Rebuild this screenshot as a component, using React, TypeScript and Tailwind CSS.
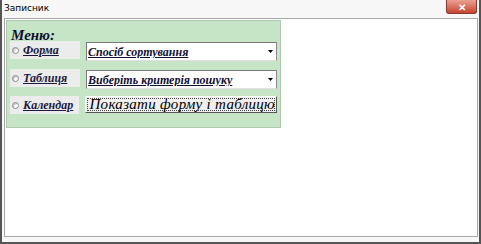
const serif = { fontFamily: '"Liberation Serif", "Times New Roman", serif' };

function Radio() {
  return <span className="inline-block h-[7px] w-[7px] shrink-0 rounded-full border border-[#8a8a8a] bg-white shadow-[inset_1px_1px_1px_#bbb]" />;
}

function RowLabel({ text }: { text: string }) {
  return (
    <div className="flex h-[18px] w-[71px] items-center gap-[4px] bg-[#ececec] pl-[2px]">
      <Radio />
      <span className="whitespace-nowrap text-[12px] font-bold italic underline leading-none text-[#1a1a40]" style={serif}>
        {text}
      </span>
    </div>
  );
}

function Select({ text }: { text: string }) {
  return (
    <div className="flex h-[19px] w-[191px] items-center border border-t-[#7a7a7a] border-l-[#7a7a7a] border-b-[#e0e0e0] border-r-[#8a8a8a] bg-white pl-[1px]">
      <span className="flex-1 truncate text-[12px] font-bold italic underline leading-none text-[#101030]" style={serif}>
        {text}
      </span>
      <span className="flex h-full w-[12px] items-center justify-center">
        <svg width="5" height="3" viewBox="0 0 5 3">
          <path d="M0 0h5L2.5 3z" fill="#000" />
        </svg>
      </span>
    </div>
  );
}

export default function App() {
  return (
    <div className="h-[244px] w-[481px] overflow-hidden border-b-2 border-l-2 border-r-2 border-[#555] bg-[#f7f7f7]">
      <div className="flex h-[18px] items-start justify-between">
        <span className="pl-[2px] pt-[4px] text-[9px] leading-none text-black" style={{ fontFamily: '"DejaVu Sans", sans-serif' }}>
          Записник
        </span>
        <div className="mr-[2px] flex h-[14px] w-[31px] items-center justify-center rounded-b-[3px] border border-t-0 border-[#8a3a30] bg-gradient-to-b from-[#e8a090] to-[#c84030] text-[10px] font-bold leading-none text-white">
          ✕
        </div>
      </div>
      <div className="ml-[2px] mr-[1px] h-[219px] border border-[#a8a8a8] bg-white p-px">
        <div className="flex h-[108px] w-[275px] flex-col border border-[#b0c8b0] bg-[#c6e4c6] px-[3px]">
          <div className="h-[20px] pl-[1px] pt-[1px]">
            <span className="text-[15px] font-bold italic underline leading-none text-[#101030]" style={serif}>
              Меню:
            </span>
          </div>
          <div className="flex items-start gap-[6px]">
            <RowLabel text="Форма" />
            <div className="mt-[1px]"><Select text="Спосіб сортування" /></div>
          </div>
          <div className="mt-[8px] flex items-start gap-[6px]">
            <RowLabel text="Таблиця" />
            <div className="mt-[1px]"><Select text="Виберіть критерія пошуку" /></div>
          </div>
          <div className="mt-[7px] flex items-start gap-[6px]">
            <RowLabel text="Календар" />
            <button className="relative flex h-[17px] w-[192px] items-center border border-t-[#fff] border-l-[#fff] border-b-[#555] border-r-[#555] bg-[#efefef] p-[1px]">
              <span className="absolute inset-[1px] border border-dotted border-[#444]" />
              <span className="relative block w-full whitespace-nowrap pl-[2px] text-left text-[15px] italic leading-[13px] tracking-[0.3px] text-black" style={serif}>
                Показати форму і таблицю
              </span>
            </button>
          </div>
        </div>
      </div>
    </div>
  );
}
